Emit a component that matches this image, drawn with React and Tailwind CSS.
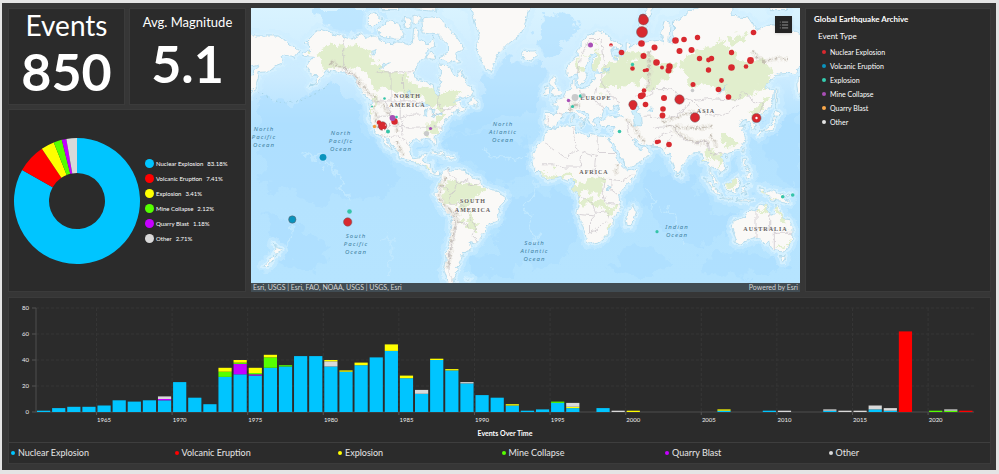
import { List } from "lucide-react";

const CYAN = "#00c5ff";
const RED = "#ff0000";
const YELLOW = "#ffff00";
const GREEN = "#55ff00";
const PURPLE = "#c500ff";
const GRAY = "#d9d9d9";

const categories = [
  { name: "Nuclear Explosion", share: 83.18, color: CYAN, mapColor: "#d8292f" },
  { name: "Volcanic Eruption", share: 7.41, color: RED, mapColor: "#0a93bd" },
  { name: "Explosion", share: 3.41, color: YELLOW, mapColor: "#35cdb0" },
  { name: "Mine Collapse", share: 2.12, color: GREEN, mapColor: "#a94fb5" },
  { name: "Quarry Blast", share: 1.18, color: PURPLE, mapColor: "#fba84a" },
  { name: "Other", share: 2.71, color: GRAY, mapColor: "#e3e3e3" },
];

// stacked from the axis up: [value, color]
const years = {
  1961: [[1, CYAN]],
  1962: [[3, CYAN]],
  1963: [[4, CYAN]],
  1964: [[4, CYAN]],
  1965: [[5, CYAN]],
  1966: [[9, CYAN]],
  1967: [[8, CYAN]],
  1968: [[9, CYAN]],
  1969: [[9, CYAN], [1, PURPLE], [2, GRAY]],
  1970: [[23, CYAN]],
  1971: [[11, CYAN]],
  1972: [[6, CYAN]],
  1973: [[27, CYAN], [4, GREEN], [3, YELLOW]],
  1974: [[29, CYAN], [8, PURPLE], [1, GREEN], [2, YELLOW]],
  1975: [[28, CYAN], [1, PURPLE], [1, GREEN], [4, YELLOW]],
  1976: [[34, CYAN], [8, GREEN], [2, YELLOW]],
  1977: [[35, CYAN], [1, GREEN]],
  1978: [[43, CYAN]],
  1979: [[43, CYAN]],
  1980: [[35, CYAN], [4, GRAY], [1, YELLOW]],
  1981: [[31, CYAN], [1, YELLOW]],
  1982: [[36, CYAN], [2, YELLOW]],
  1983: [[42, CYAN]],
  1984: [[47, CYAN], [5, YELLOW]],
  1985: [[26, CYAN], [2, YELLOW]],
  1986: [[14, CYAN], [3, GRAY]],
  1987: [[40, CYAN], [1, YELLOW]],
  1988: [[32, CYAN], [1, YELLOW]],
  1989: [[22, CYAN], [1, GRAY]],
  1990: [[13, CYAN]],
  1991: [[11, CYAN]],
  1992: [[5, CYAN], [1, YELLOW]],
  1993: [[1, CYAN]],
  1994: [[2, CYAN]],
  1995: [[7, CYAN], [1, GREEN]],
  1996: [[3, CYAN], [1, YELLOW], [3, GRAY]],
  1998: [[3, CYAN]],
  1999: [[1, GRAY]],
  2000: [[1, YELLOW]],
  2006: [[1, CYAN], [1, YELLOW]],
  2009: [[1, CYAN]],
  2010: [[1, GRAY]],
  2013: [[1, CYAN], [1, GRAY]],
  2014: [[1, GRAY]],
  2015: [[1, GRAY]],
  2016: [[2, CYAN], [3, GRAY]],
  2017: [[1, CYAN], [2, GRAY]],
  2018: [[62, RED]],
  2020: [[1, GREEN]],
  2021: [[1, GREEN], [1, GRAY]],
  2022: [[1, RED]],
};

// coastlines as lon,lat pairs
const land = [
  // north america
  "-168,65.6 -164,66.5 -162,66.2 -166,68.3 -163,69.3 -160,70.6 -156.5,71.3 -152,70.8 -145,70 -141,69.6 -136,69 -133,69.5 -128,70.2 -125,69.5 -121,69.8 -117,69 -114,68.2 -109,68 -105,68.4 -99,67.8 -96,68.2 -95,71.8 -92,71 -92.5,69.5 -88,68.6 -86,67.5 -82,69.6 -81.5,67.5 -86,66.3 -87,64.7 -91,63.5 -94,61 -94.7,58.8 -92.5,57 -88,56.5 -82.3,55.1 -82,53 -80,51.3 -78.8,52.2 -79.5,54.5 -76.7,56.5 -78.5,58.7 -77.5,60 -78,62.4 -74,62.3 -71,61.2 -69.5,59 -67,58.4 -64.5,60.3 -62,57.5 -60.5,55.5 -57,54.5 -55.8,52.6 -58.5,51.4 -61,50.2 -66.5,50.2 -69,48.6 -65,49.2 -64.4,48.2 -65.5,47.4 -64.5,46.3 -61.5,45.8 -60,46.5 -61,45.3 -65.7,43.5 -66,45 -70,43.7 -70.7,42 -74,40.6 -76,37 -76,35 -81,32 -81.3,30 -80.2,26 -81.3,25.3 -82.7,28 -84,30 -89,30.3 -89.5,29.2 -94.5,29.5 -97.3,27.5 -97.8,22.5 -96,19 -94.5,18.2 -91,18.7 -90.3,21 -87,21.5 -88,18.5 -88.8,16 -83.5,15 -83.8,11 -82,9 -79.5,9.5 -77.3,8.4 -78,7.5 -80,7.4 -83,8.2 -85.7,10.2 -87.7,13 -92,14.5 -94.5,16.2 -99.5,16.7 -105.5,20 -105.5,22.5 -109.3,26 -112.5,30 -114.6,31.7 -112.5,28 -109.5,23.2 -112,25 -115,28 -116,30.5 -117.2,32.7 -120.6,34.5 -122.5,37.5 -124.3,40.4 -124,44 -124.5,48.2 -122.7,48.8 -125,50.3 -128,51.5 -130.5,54.5 -133.5,57.5 -136.5,58.3 -140,59.8 -144,60 -148,60.5 -151.5,59.3 -151,61 -154,59.2 -158.5,56.3 -163.5,54.7 -160.5,56 -157.5,58.7 -162,58.8 -164,60.3 -166,61.6 -161,64.4 -166.3,64.6",
  // south america
  "-77.3,8.4 -75.5,10.6 -72,12 -71.5,10.8 -68,11.5 -62,10.7 -57,6 -51.5,4.5 -50,0.5 -44,-2.5 -40,-3 -35.3,-5.3 -35,-8.5 -39,-13 -39.2,-17.5 -41,-22 -44.5,-23 -48.5,-25.8 -48.8,-28.5 -53,-33.5 -54.9,-35 -58.3,-34 -57,-36.5 -58,-38.3 -62,-39 -62.3,-41 -65,-41 -63.7,-42.5 -65.5,-45 -67.5,-46.3 -65.9,-47.8 -69,-51 -68.3,-52.5 -65.2,-54.7 -69,-55.5 -73.5,-52.5 -75.5,-48 -74,-44.5 -73.7,-39.5 -71.6,-33 -71.4,-28 -70.2,-20 -71.5,-17.5 -76.2,-13.9 -79.5,-8 -81.3,-4.5 -80,-3 -80.8,-1 -78.8,1.5 -77.3,4",
  // greenland, canadian arctic, atlantic islands
  "-73,78.3 -66,76 -58,75.5 -55,72.5 -53,70 -54,67.3 -52,64.2 -48.5,61 -44,60 -42.5,62.5 -40,65 -33,68 -25,70.2 -22,72.5 -19,76 -20,80 -60,80",
  "-61.5,66.7 -68,65.5 -64.5,63.2 -71.5,62.8 -78,64.5 -73,65.5 -73,68 -79,70 -89,70.5 -90,73.5 -80,73.8 -72,71.5 -67,69.5",
  "-117,69.8 -105,69 -101.5,69.8 -105,72.5 -111,73 -118,71.5",
  "-125,72 -123,71.2 -116,73.3 -121,74.5 -124.5,74",
  "-87,64 -80.5,63.8 -84,65.8",
  "-102,72 -97,71.5 -97,73.6 -101,73.8",
  "-95,72.3 -91,72.8 -91,74 -95,74",
  "-96,75 -80,74.7 -80,76.5 -96,77",
  "-117,75 -105,75 -105,77 -117,77",
  "-59.3,47.7 -53,46.7 -53,48.5 -55.5,50 -55.6,51.6 -57.5,50.5",
  "-85,21.9 -82.5,23.1 -77,21.8 -74.3,20.2 -77.7,19.9 -78.5,21",
  "-74.4,18.4 -73,19.9 -69.5,19.6 -68.5,18.3 -71.5,17.8",
  "-24,65.5 -22.5,66.4 -18,66.1 -15,66.2 -13.7,65 -18.7,63.4 -22.7,63.9",
  "-5.5,50.1 1.3,51.2 1.7,52.7 -0.2,53.6 -2,55.8 -2,57.6 -3.5,58.6 -5,58.6 -6,56.8 -4.8,54.8 -3,54 -4.5,53.2 -5,51.8 -3,51.3",
  "-10,51.6 -6.3,52.2 -6,54 -7.5,55.3 -10,54.2",
  "-61,-51.5 -58,-51.5 -59,-52.3",
  // eurasia
  "-9,37 -9.4,38.8 -8.8,43.3 -1.7,43.4 -1.2,46 -4.6,48.4 -1.5,48.7 -1.5,49.7 1.5,50.2 4,51.8 5,53.3 8.5,53.8 8.2,57 10.6,57.7 10.5,55.5 11,54.2 14,54.3 18.5,54.8 21,55.3 21.5,57.5 24,57.2 23.5,59.2 30,60 25,60.3 22.5,60.2 21.5,61.5 21.5,63 25.3,65 22,65.8 21.3,64.5 17.5,62 17.3,60.6 18.8,59.8 16.5,57 14.2,55.5 12.8,55.6 11.2,59 10.5,59.3 7,58 5.3,59 5,62 10.5,64 14.5,68 19,70 25.5,71 31,70.3 33,69.4 41,67.7 40,66.4 34,66.7 35,64.4 38,64 37,65 40,64.7 44,66 44,68.5 46.5,68 46,66.8 54,68.5 60,68.8 65,69 68.5,68.2 66.7,70.8 69,73 72.8,72.7 72,68.5 74,68 75,71 75,72.8 80.5,73.6 87,75 98,76.3 105,77.6 113,75.8 113.5,73.8 124,73.5 129,71.5 133,71.6 139,72.3 150,71.4 160,69.8 170,69.8 176,69.8 180,68.9 190.2,66.2 187,64.4 181,65 178,64.6 179.3,62.5 174,61.6 170,60 163.5,59.8 163,57.7 162,56 162,54.5 158.5,53 156.7,51 155.7,55 156,57.5 161,60.3 163.5,62.4 157,61.6 154,59.5 148,59.4 142,59.2 135.3,54.7 141,53 140.5,50 138,46.5 134,43.3 130.7,42.3 127.5,39.7 129.4,37 129,35.2 126.4,34.5 126.8,37 125,39.5 121.5,39 122,40.6 118,39 119,37.5 122.4,37.2 119.5,35 122,31 121.5,28.5 118,24.5 114,22.4 110.3,21 108,21.6 106,19 109,14 109,11.8 106.5,9.5 105,8.7 104.8,10.3 102.5,12 101,13.4 99.5,12 99.3,9.5 101,7 103.3,4.5 104,1.4 101.3,2.8 100.3,6 98.3,8.3 98.5,13 97.3,16.7 94.3,16 94,19 91.8,22.5 88,21.7 86.5,20 82,16.5 80.2,14 79.9,10.5 77.6,8.1 75.5,11.5 73,17 72.7,21 70.5,20.8 69,22.3 67,24.8 61.5,25.2 57,26.9 54.5,26.6 51.5,27.9 50,30.1 48,30 50.2,26.5 51.5,25.5 54,24.1 56.3,26.2 57,24 59.8,22.4 57.8,19 55,17.1 52,15.6 45,12.8 43.3,12.7 42.7,16.5 39,21.5 35,28 32.5,30 32.3,31.2 34.3,31.3 36,35 36,36.8 30.6,36.8 27.5,36.8 26.3,39.3 29,41 31,41.2 35,42 41.5,41.5 38,44.4 39.2,47.2 35,46.2 36.5,45.3 33.6,44.5 33,46 31,46.6 28.7,44 28,41.6 26,40.8 23,40.4 24,38 22.7,36.5 21.3,37.7 19.4,41 19.4,42 14,45 12.3,45.2 12.5,44 15.8,42 18.4,40 16.8,40.4 16,38 15.7,40 12.3,41.8 10.4,43.5 8.8,44.4 3.2,43.2 3,41.8 -0.3,39.5 -0.5,38 -2,36.8 -5.4,36.1 -6.5,37",
  // africa and madagascar
  "-6,35.8 -2,35.2 3,36.9 10,37.3 11,34 15.3,32.3 20,31 20,32.7 25,31.7 32.5,31.2 32.5,30 35.5,24 37.3,20.8 39.5,15.5 43.3,12 45,10.5 51.2,11.8 48,4.5 41.5,-1.8 39,-5 40.7,-14.8 35,-20 35.5,-24 32.7,-26 32.5,-28.5 28,-33 25.7,-34 20,-34.8 18.3,-34 17,-29 14.5,-22.5 11.8,-16.5 13.7,-11 12,-5 9,-1 9.7,4 6,4.3 1.5,6.2 -4,5.2 -7.5,4.4 -13,9 -16.8,13 -17.4,14.7 -16.3,19 -17,21 -14.5,26 -10,29.6 -9.7,31.5",
  "49.3,-12 50.4,-15.7 47,-25 44,-25 43.4,-22 44.5,-16.2",
  // mediterranean
  "8.3,39 9.7,39.3 9.4,42.8 8.6,42",
  "12.5,37.8 15.5,38.2 15,36.7",
  "23.5,35.4 26.2,35.2 24.5,34.9",
  "32.4,34.9 34.3,35.5 33.5,34.7",
  // russian arctic
  "52,71 57,70.7 56,73 68,76.8 60,76 54,73.5",
  "139,75 150,75 145,76 138,76",
  // asia and oceania
  "80,9.5 81.8,7.3 80.5,6",
  "95.3,5.6 98,4.2 104,-2 106,-5.8 102.5,-4 98.7,1.7",
  "105.2,-6.8 108.5,-6.7 114.5,-7.8 114.4,-8.7 106.5,-7.4",
  "109,1.5 113,3.2 116.8,7 119,5.2 117.5,1 116,-4 111,-3.3 109.2,-0.5",
  "119.5,-5.5 119,-2.8 120,0.8 125,1.5 120.5,0.3 123,-0.8 121,-2 122.5,-4.8 120.5,-3",
  "116,-8.4 119,-8.4 123,-8.4 127,-8.5 124,-10 119,-9.6",
  "120.5,18.5 122.2,18.4 121.5,15 124,12.7 120.7,13.8 120,16",
  "122,7 123.5,8.6 125.5,9.7 126.3,7 125,5.8",
  "122,11.5 125,12 124.5,10.3 122.5,10",
  "121,25.2 121.5,24.5 120.8,22 120,23",
  "108.7,19.2 111,20 110,18.3",
  "131,34 135.5,35.6 139.5,38.5 140.2,41.3 141.5,41.3 142,39.5 140.8,35.7 138,34.6 133,34 131.5,31.5 130.2,31.3 129.8,33",
  "140,42 141.7,45.4 145.3,43.3 143,42",
  "142,46 142,53.5 143.3,53.5 143,49",
  "131,-0.8 134,-1 135,-3.3 138,-1.7 145,-4.3 147.8,-6.5 150.7,-10.5 147,-9.5 143,-9 138.5,-8.3 138,-5.8 133,-4",
  "148.5,-5.8 152,-4.2 151.5,-5.8 149.5,-6.4",
  "114,-22 113.4,-26 115.7,-32 115.2,-34.3 118,-35 124,-33 131,-31.5 135.5,-34.8 138,-33 138.5,-35.5 140,-37.8 143.5,-38.8 146.3,-39 150,-37.4 153,-32 153.3,-25.5 149,-20.5 146,-18.8 145.3,-15 142.6,-10.8 141,-17 139.5,-17.5 135.5,-15 137,-12.2 132.5,-11.3 130,-13 129,-15 126,-14 122.3,-17.5 121,-19.5 117,-20.7",
  "144.7,-40.8 148.2,-40.9 147.5,-43.3 146,-43.5",
  "172.8,-34.5 175,-36.8 178.5,-37.7 176.8,-40 175,-41.5 173.8,-39.3 174.6,-37.5",
  "172.7,-40.6 174.2,-41.7 171,-44.5 168.5,-46.6 166.6,-46 170.5,-42.8",
];

const lakes = [
  "47,44.5 51,47 53,45.3 50.5,44.3 53.5,41 54,37 50,37.4 49.5,40.5",
  "-92,46.8 -88,48.7 -84.7,46.6 -88,46.7",
  "-87.8,42 -86.3,42 -85.5,45.8 -88,44.5",
  "-84,46 -81,45.5 -82,43.2 -83.5,44",
  "-83,41.7 -79,42.8 -81,42.8",
  "-79.5,43.3 -76.3,43.6 -77,44",
  "-98.5,50.5 -96.5,51 -98,53.5 -99.5,53",
  "-117,61 -110,62.5 -115,62.3",
  "-124,66 -119,66.5 -121,65",
  "31.8,0.3 34,0 33,-2.5 31.8,-2",
  "104,51.5 110,55.5 109,55 106,52",
  "30,61 33,61 32,60 31,60",
  "58.5,45 61,46.5 60.5,44",
];

const vegetation = [
  "-160,66 -150,67.5 -140,67 -130,67.5 -122,64 -112,60 -100,58 -92,55.5 -82,52 -72,52 -66,51.5 -68,49 -78,46.5 -88,48 -94,50 -104,53.5 -114,54 -120,53.5 -123,58 -132,62 -146,62 -158,60",
  "-90,37 -84,34 -79,37 -72,43 -76,44 -82,38",
  "-123,42 -120,46 -118,52 -124,53 -122,47",
  "-90,16 -84,14 -84,11 -88,13",
  "-75,6 -66,5 -54,4 -52,0 -50,-4 -56,-9 -60,-12 -66,-14 -71,-13 -76,-8 -78,-2",
  "-60,-18 -56,-16 -54,-24 -52,-29 -60,-26 -63,-21",
  "9,4 14,4 20,5 28,4 30,0 28,-5 20,-5 14,-4 10,-1",
  "14,-7 24,-8 32,-9 35,-14 36,-18 32,-16 26,-12 16,-12",
  "-13,9 -8,9 2,8 8,8 9,5 0,6 -8,5",
  "30,-22 33,-24 31,-29 29,-28",
  "12,58 16,60 16,64 21,67 26,67 29,62 24,61 24,66 16,64 12,61",
  "28,60 36,63 44,65 56,66 62,64 70,63 76,61 70,56 60,55 52,57 44,55 36,55 26,54",
  "80,63 88,67 96,66 104,68 112,66 120,64 134,62 140,60 136,56 126,53 118,50 110,50 104,53 96,55 86,57 80,60",
  "126,44 132,48 138,52 136,46 131,43",
  "110,70 120,71 122,69 112,68",
  "95,28 100,24 104,22 106,17 103,14 99,17 97,22",
  "110,30 116,30 119,27 112,24 106,25",
  "110,1 115,4 117,1 114,-2",
  "97,4 103,-2 104,-4 99,1",
  "133,-2 140,-4 146,-7 142,-7 136,-4",
  "130,-12.5 136,-12.5 136,-15 131,-15",
  "142,-12 145,-16 149,-21 151,-26 148,-25 144,-18",
  "144,-37 148,-37.5 150,-35 147,-36",
];

const borders = [
  "-141,69.5 -141,60.3 -136,59.5 -130,55.5",
  "-123,49 -95,49 -89,48 -83,46 -82,42.5 -79,43.3 -75,45 -71,45.3 -67.5,47",
  "-117,32.5 -111,31.3 -106.5,31.8 -101,29 -97.3,26",
  "-114,49 -111,44.5 -111,37 -114,33",
  "-104,49 -104,41 -102,37 -103,32",
  "-120,42 -111,42 -104,41 -96,43 -91,43",
  "-109,37 -94.5,36.5 -82,36.5 -76,36.5",
  "-120,60 -102,60 -95,60",
  "-110,60 -110,49",
  "-102,60 -101.5,49",
  "-79,52 -79.5,47 -75,45",
  "-72,12 -72,7 -67.5,6 -67,1.5 -70,-4 -73,-7 -70,-11 -65,-11 -60,-14 -58,-20 -54,-26 -57,-30 -53,-33.5",
  "-79,1 -75,0 -70,-4",
  "-70,-18 -68,-22 -68,-28 -70,-34 -72,-42 -72,-50 -69,-52",
  "-68,-22 -63,-22 -58,-26",
  "-67,1.5 -60,5 -59,1.5 -52,3",
  "-9,27 -5,25 4,19 12,23 10,31 9,36",
  "25,31 25,22 37,22",
  "25,20 15,23 14,13 4,13 -4,15 -12,15",
  "24,19 23,10 28,5 34,5 42,4 48,8",
  "34,5 34,-1 38,-4",
  "30,3 29,-5 30,-9 34,-11 40,-11",
  "12,-6 17,-8 22,-11 24,-17 31,-16 33,-20",
  "12,-17 24,-18 20,-22 20,-29 26,-26 31,-22",
  "-7,42 -7,37",
  "-1.5,43.3 3,42.5",
  "3,51 8,49 7,46 7,44",
  "14,54 15,51 12,48 14,46",
  "24,54 23,50 28,46 29,45",
  "28,60 28,56 32,53 36,50 40,48",
  "12,59 14,64 20,69 28,69 30,62",
  "50,51 60,51 62,54 72,54 80,51 87,49 82,45 75,42 68,41 60,42 56,42",
  "87,49 98,50 110,49.5 117,49.5 120,53 130,48 134,48 131,43",
  "87,49 96,43 106,42 117,47",
  "44,40 45,37 46,33 48,30",
  "61,36 66,37 74,37 79,33 81,30 88,28 97,28",
  "61,25 63,30 70,33 74,34",
  "70,24 72,29 75,32",
  "97,28 98,24 101,21 105,22 108,21.6",
  "129,-15 129,-31.5",
  "138,-17 138,-26 141,-26 141,-38",
  "129,-26 138,-26",
  "141,-29 153,-29",
];

const mountains = [
  "-74,6 -78,-1 -78,-7 -74,-13 -69,-17 -68,-23 -70,-32 -71,-39 -73,-47",
  "-72,-15 -67,-17 -66,-22",
  "-150,63 -140,61 -132,58 -126,53 -119,50 -114,46 -110,42 -106,38 -106,34",
  "-121,47 -120,40 -118,36",
  "-107,29 -104,24 -101,20",
  "70,37 75,36 80,32 86,29 93,28 98,28",
  "68,39 75,41 82,43 90,44",
  "76,37 84,36 92,36 101,37",
  "98,32 102,29 103,25",
  "44,41 50,36 53,31 57,28",
  "38,9 37,12 39,14",
  "6,45 10,47 14,47",
  "59,66 59,60 58,54",
  "126,66 134,63 142,64 150,64",
];

const dots = {
  "#d8292f": [
    [643, 18, 4], [643.5, 20, 5], [642, 32, 5.5], [641.5, 43.5, 3.3], [654.5, 47.5, 3], [675.5, 40.5, 3.3],
    [684, 39.5, 2.8], [697.5, 37.5, 2.7], [679.5, 51, 3], [691.5, 50, 3], [621.5, 52.5, 2.8],
    [643.5, 56, 3], [656.5, 62.5, 3.3], [662, 67.5, 2], [669.5, 66.5, 3.2], [668.5, 70.5, 3],
    [632.5, 68.5, 2.3], [644.5, 70.5, 1.8], [647, 70, 2], [699.5, 58.5, 2.7], [708.5, 60, 2.4],
    [711.5, 58.5, 2.7], [708.5, 70, 2.7], [731.5, 52.5, 2.7], [753.5, 32.5, 2.8], [750.5, 60.5, 3.4],
    [746, 66.5, 2.3], [731.5, 67.5, 3.3], [721.5, 80.5, 2.4], [718.5, 89.5, 2.8], [728.5, 97, 2.8],
    [693, 84.5, 2.5], [644, 90.5, 2.3], [641, 96, 3.2], [643, 95, 2.8], [633, 104.5, 4.2],
    [633, 107, 3], [645.5, 104.5, 2.8], [664, 98, 3], [679.5, 99.5, 4.7], [663, 109, 2.8],
    [662.5, 115.5, 2.9], [695, 117.5, 4.7], [756.5, 118, 4.6], [657, 142, 2.3], [659, 141.5, 2],
    [669, 144.5, 2.8], [611, 45, 1.8], [394.5, 121.5, 3.2], [382.5, 126, 4.3], [379, 122.5, 2.2],
    [347.7, 222, 4.2],
  ],
  "#0a93bd": [[323, 157.3, 3.4], [292.3, 219.5, 3.7]],
  "#35c4a8": [
    [632.5, 64.5, 1.7], [580.5, 96, 1.8], [572.5, 106.5, 1.6], [619.5, 131.5, 1.8], [384.5, 98.5, 1.3],
    [372, 106.5, 1], [396.5, 117, 1.3], [388, 131.5, 2], [349.5, 211.5, 2.3], [782.7, 196.7, 1.8],
    [792.7, 195, 1.8], [657, 231.7, 1.6],
  ],
  "#a94fb5": [[590.5, 45, 2.5], [568.5, 100.5, 1.7], [392.5, 118, 2.9], [430.5, 128.5, 1.6]],
  "#f39a3f": [[374.5, 126.5, 1.7]],
  "#c9cacb": [[575, 97.5, 3.4], [583.5, 95.5, 2.2], [692.5, 90.5, 1.8], [426.5, 133.5, 2.6], [434.5, 126, 1]],
  "#ffffff": [[756.5, 118, 1.2], [611, 46, 0.8], [383.5, 130, 1], [385.5, 125, 0.6], [378, 128.5, 0.8]],
};

const continentLabels = [
  [407.5, 98, "NORTH"],
  [407.5, 107, "AMERICA"],
  [473, 203, "SOUTH"],
  [473, 212, "AMERICA"],
  [596, 100, "EUROPE"],
  [706, 113, "ASIA"],
  [594, 174, "AFRICA"],
  [765.5, 231, "AUSTRALIA"],
];

const oceanLabels = [
  [264, 131, ["North", "Pacific", "Ocean"]],
  [341, 135, ["North", "Pacific", "Ocean"]],
  [503, 126, ["North", "Atlantic", "Ocean"]],
  [356, 238, ["South", "Pacific", "Ocean"]],
  [534.5, 245, ["South", "Atlantic", "Ocean"]],
  [677, 229, ["Indian", "Ocean"]],
];

const oceanFloor = [
  "M310 8H385L392 26 372 38 340 36 318 22Z",
  "M258 96 296 104 330 84 356 104 366 130 386 156 398 178 380 200 350 196 318 204 290 190 262 186Z",
  "M262 210 300 226 330 250 318 272 280 262Z",
  "M486 64 520 56 548 68 540 98 520 116 488 122 462 136 444 134 470 112 482 92Z",
  "M440 142 490 130 530 142 530 178 506 186 470 164 446 158Z",
  "M508 196 552 190 578 200 574 240 560 262 522 268 500 258 498 228Z",
  "M470 256 514 254 512 276 472 274Z",
  "M544 12 582 18 568 38 548 60 536 40Z",
  "M646 170 694 178 714 216 744 214 724 240 690 246 660 226 642 206Z",
  "M768 124 800 108V190L778 172 764 150Z",
  "M700 256 760 252 790 264 760 276 704 274Z",
  "M620 250 650 246 672 262 640 278 610 270Z",
];

function project(lon, lat) {
  const rad = (lat * Math.PI) / 180;
  const x = 559 + lon * 1.527;
  const y = 187 - 87.5 * Math.log(Math.tan(Math.PI / 4 + rad / 2));
  return `${x.toFixed(1)} ${y.toFixed(1)}`;
}

function toPath(points, close) {
  const list = points.split(" ").map((pair) => {
    const [lon, lat] = pair.split(",").map(Number);
    return project(lon, lat);
  });
  return "M" + list.join("L") + (close ? "Z" : "");
}

const landPath = land.map((shape) => toPath(shape, true)).join("");
const lakePath = lakes.map((shape) => toPath(shape, true)).join("");
const greenPath = vegetation.map((shape) => toPath(shape, true)).join("");
const borderPath = borders.map((line) => toPath(line, false)).join("");
const mountainPath = mountains.map((line) => toPath(line, false)).join("");

function Panel({ className = "", children }) {
  return (
    <section className={`border border-[#3b3b3b] bg-[#2b2b2b] ${className}`}>
      {children}
    </section>
  );
}

function WorldMap() {
  return (
    <svg viewBox="251 8 549 275" preserveAspectRatio="xMidYMid slice" className="block min-h-0 w-full flex-1" role="img" aria-label="Event map">
      <defs>
        <filter id="coast" x="-5%" y="-5%" width="110%" height="110%" colorInterpolationFilters="sRGB">
          <feTurbulence type="fractalNoise" baseFrequency="0.16" numOctaves="3" seed="4" />
          <feDisplacementMap in="SourceGraphic" scale="6" xChannelSelector="R" yChannelSelector="G" />
        </filter>
        <filter id="ragged" x="-5%" y="-5%" width="110%" height="110%" colorInterpolationFilters="sRGB">
          <feTurbulence type="fractalNoise" baseFrequency="0.07" numOctaves="4" seed="9" />
          <feDisplacementMap in="SourceGraphic" scale="24" xChannelSelector="R" yChannelSelector="G" />
        </filter>
        <clipPath id="landClip">
          <path d={landPath} />
          <path d={landPath} transform="translate(-549.7 0)" />
        </clipPath>
        <linearGradient id="sea" x1="0" y1="0" x2="0" y2="1">
          <stop offset="0" stopColor="#d9f3ff" />
          <stop offset="0.25" stopColor="#cbebff" />
          <stop offset="0.42" stopColor="#b4e2ff" />
          <stop offset="1" stopColor="#b6e4ff" />
        </linearGradient>
      </defs>

      <rect x="251" y="8" width="549" height="275" fill="url(#sea)" />
      <g filter="url(#ragged)">
        <path d={oceanFloor.join("")} fill="#aadcff" opacity="0.55" />
        <path
          d="M292 222 288 252M380 240 392 234 390 276M538 184 528 214 540 250M648 190 656 204 650 214M668 206 684 246M480 150 510 160 540 156M300 150 330 166 350 200"
          fill="none"
          stroke="#c0e8ff"
          strokeWidth="2"
        />
      </g>

      <g filter="url(#coast)" strokeLinejoin="round">
        {[0, -549.7].map((shift) => (
          <g key={shift} transform={`translate(${shift} 0)`}>
            <path d={landPath} fill="none" stroke="#cdeeff" strokeWidth="12" opacity="0.5" />
            <path d={landPath} fill="none" stroke="#d6f1ff" strokeWidth="5" />
          </g>
        ))}
        {[0, -549.7].map((shift) => (
          <path key={shift} d={landPath} transform={`translate(${shift} 0)`} fill="#faf9f7" stroke="#a3d3e8" strokeWidth="0.7" />
        ))}
        <path
          d="M258 91C272 104 296 106 318 92L330 84"
          fill="none"
          stroke="#a5d3e6"
          strokeWidth="1"
          strokeDasharray="2 3"
        />
        <g clipPath="url(#landClip)">
          <path d={greenPath} fill="#e1eecd" filter="url(#ragged)" />
          <path d={mountainPath} fill="none" stroke="#dcd6cd" strokeWidth="5" strokeDasharray="2 1" opacity="0.45" />
          <path d={mountainPath} fill="none" stroke="#b5aca2" strokeWidth="1.4" strokeDasharray="3 1 1 2" opacity="0.7" />
        </g>
        <path d={borderPath} fill="none" stroke="#c9c3c9" strokeWidth="0.7" />
        <path d={lakePath} fill="#cfeefc" stroke="#9dcfe4" strokeWidth="0.6" />
      </g>

      {continentLabels.map(([x, y, text]) => (
        <text key={`${text}-${y}`} x={x} y={y} textAnchor="middle" stroke="#ffffff" strokeOpacity="0.6" strokeWidth="1" paintOrder="stroke" className="fill-[#66615d] font-['Liberation_Serif',serif] text-[6px] font-bold tracking-[1px]">
          {text}
        </text>
      ))}
      {oceanLabels.map(([x, y, lines]) => (
        <text key={`${x}-${y}`} y={y} textAnchor="middle" className="fill-[#3f819f] font-['Noto_Sans',sans-serif] text-[6px] italic tracking-[1px]">
          {lines.map((line, i) => (
            <tspan key={line} x={x} y={y + i * 8}>
              {line}
            </tspan>
          ))}
        </text>
      ))}

      {Object.entries(dots).map(([color, points]) =>
        points.map(([cx, cy, r]) => (
          <circle
            key={`${color}-${cx}-${cy}`}
            cx={cx}
            cy={cy}
            r={r}
            fill={color}
            stroke={r > 3.4 ? "#6b5a60" : "none"}
            strokeOpacity="0.7"
            strokeWidth="0.7"
          />
        ))
      )}
    </svg>
  );
}

function Donut() {
  const total = categories.reduce((sum, item) => sum + item.share, 0);
  let turn = 0;

  const at = (fraction, radius) => {
    const angle = fraction * Math.PI * 2 - Math.PI / 2;
    return `${64 + radius * Math.cos(angle)} ${64 + radius * Math.sin(angle)}`;
  };

  return (
    <svg viewBox="0 0 128 128" className="w-32 shrink-0" role="img" aria-label="Share of events by type">
      {categories.map((item) => {
        const start = turn;
        turn += item.share / total;
        const large = turn - start > 0.5 ? 1 : 0;
        return (
          <path
            key={item.name}
            d={`M${at(start, 63)}A63 63 0 ${large} 1 ${at(turn, 63)}L${at(turn, 28)}A28 28 0 ${large} 0 ${at(start, 28)}Z`}
            fill={item.color}
          />
        );
      })}
    </svg>
  );
}

function Timeline() {
  const slot = 15.12;
  const left = 27;
  const base = 114;
  const yOf = (value) => base - value * 1.3;

  return (
    <svg viewBox="0 0 981 144" className="block w-full font-['Lato',sans-serif] text-[6px]" role="img" aria-label="Events over time">
      {[20, 40, 60, 80].map((value) => (
        <path key={value} d={`M${left} ${yOf(value)}H965`} stroke="#363636" strokeDasharray="3 2" />
      ))}
      {[0, 20, 40, 60, 80].map((value) => (
        <g key={value}>
          <path d={`M${left - 4} ${yOf(value)}H${left}`} stroke="#555555" />
          <text x="20" y={yOf(value) + 2} textAnchor="end" fill="#eeeeee">
            {value}
          </text>
        </g>
      ))}
      {[1965, 1970, 1975, 1980, 1985, 1990, 1995, 2000, 2005, 2010, 2015, 2020].map((year) => {
        const x = left + (year - 1961) * slot;
        return (
          <g key={year}>
            <path d={`M${x} 10V${base}`} stroke="#363636" strokeDasharray="3 2" />
            <path d={`M${x} ${base}v3`} stroke="#555555" />
            <text x={x + slot / 2} y="124" textAnchor="middle" fill="#eeeeee">
              {year}
            </text>
          </g>
        );
      })}
      <path d={`M${left} 10V${base}H965`} fill="none" stroke="#4e4e4e" />
      {Object.entries(years).map(([year, parts]) => {
        let sum = 0;
        return parts.map(([value, color]) => {
          sum += value;
          return (
            <rect
              key={`${year}-${color}`}
              x={left + (year - 1961) * slot + 1}
              y={yOf(sum)}
              width="13.2"
              height={value * 1.3}
              fill={color}
            />
          );
        });
      })}
      <text x="496" y="138" textAnchor="middle" fill="#ffffff" className="text-[7px] font-bold">
        Events Over Time
      </text>
    </svg>
  );
}

export default function App() {
  return (
    <div className="flex min-h-screen flex-col bg-[#e4e4e4] pt-[3px] pr-[3px] pb-1 pl-0.5 font-['Lato',sans-serif] text-white">
      <main className="flex flex-1 flex-col gap-[5px] bg-[#363636] pt-[5px] pr-[5px] pb-1.5 pl-1.5">
        <div className="grid flex-1 grid-cols-[238fr_549fr_186fr] gap-[5px]">
          <div className="grid grid-cols-2 grid-rows-[97fr_183fr] gap-1">
            <Panel className="flex flex-col items-center">
              <h2 className="text-[28px] leading-8">Events</h2>
              <p className="text-[52px] leading-[60px] font-bold">850</p>
            </Panel>
            <Panel className="flex flex-col items-center">
              <h2 className="pt-1 text-[13px] leading-[18px]">Avg. Magnitude</h2>
              <p className="pt-0.5 text-[52px] leading-[60px] font-bold">5.1</p>
            </Panel>
            <Panel className="col-span-2 flex items-center gap-1 pl-1">
              <Donut />
              <ul className="text-[6px] leading-[15px]">
                {categories.map((item) => (
                  <li key={item.name} className="flex items-center gap-0.5 whitespace-nowrap">
                    <span className="size-[9px] rounded-full" style={{ background: item.color }} />
                    <span>{item.name}</span>
                    <span className="pl-0.5">{item.share}%</span>
                  </li>
                ))}
              </ul>
            </Panel>
          </div>

          <div className="relative flex flex-col">
            <WorldMap />
            <button type="button" aria-label="Legend" className="absolute top-2 right-2 flex size-[17px] items-center justify-center bg-[#242424] text-[#a5a5a5] shadow">
              <List size={10} strokeWidth={2} />
            </button>
            <footer className="flex justify-between bg-[#414c53] px-0.5 font-['Lato',sans-serif] text-[7px] leading-[9px] text-[#d5d5d5]">
              <span>Esri, USGS | Esri, FAO, NOAA, USGS | USGS, Esri</span>
              <span>Powered by Esri</span>
            </footer>
          </div>

          <Panel className="px-2 pt-1">
            <h1 className="text-[8px] leading-3 font-bold">Global Earthquake Archive</h1>
            <h2 className="pt-1 pl-1 text-[8px] leading-[14px]">Event Type</h2>
            <ul className="pt-0.5 pl-2 text-[7px] leading-[14px]">
              {categories.map((item) => (
                <li key={item.name} className="flex items-center gap-1">
                  <span className="size-1 rounded-full" style={{ background: item.mapColor }} />
                  {item.name}
                </li>
              ))}
            </ul>
          </Panel>
        </div>

        <Panel>
          <Timeline />
          <ul className="grid grid-cols-6 border-t border-[#3e3e3e] text-[9px] leading-5">
            {categories.map((item) => (
              <li key={item.name} className="flex items-center gap-[3px] pl-0.5 text-[#e6e6e6]">
                <span className="size-1 rounded-full" style={{ background: item.color }} />
                {item.name}
              </li>
            ))}
          </ul>
        </Panel>
      </main>
    </div>
  );
}
